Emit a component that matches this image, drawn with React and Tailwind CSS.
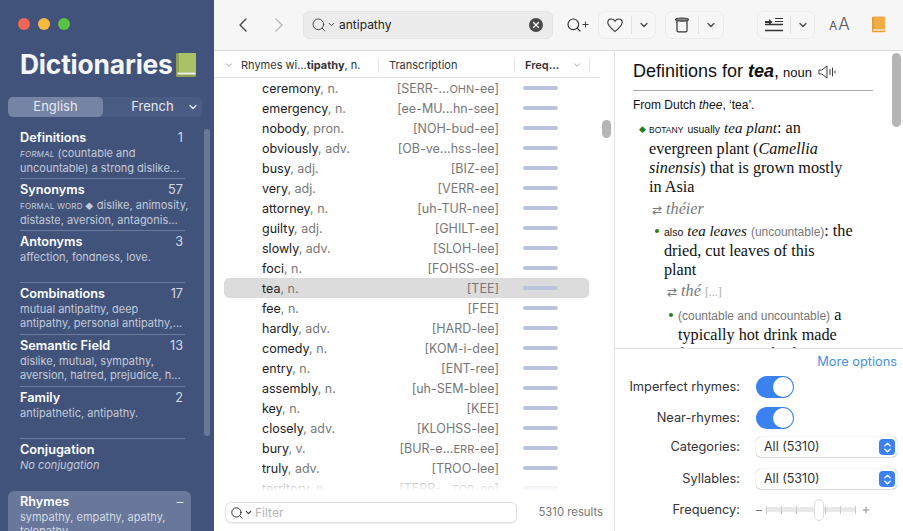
import { ChevronDown, ChevronLeft, ChevronRight, ChevronsUpDown, Plus, Search, X } from "lucide-react"

const sans = "font-['Inter','Liberation_Sans',sans-serif]"

const sections = [
  { title: "Definitions", count: "1", lines: [<><span className="italic text-[8px] tracking-wide">FORMAL</span> (countable and</>, "uncountable) a strong dislike..."] },
  { title: "Synonyms", count: "57", lines: [<><span className="text-[8px] tracking-wide">FORMAL WORD ◆</span> dislike, animosity,</>, "distaste, aversion, antagonis..."] },
  { title: "Antonyms", count: "3", lines: ["affection, fondness, love."] },
  { title: "Combinations", count: "17", lines: ["mutual antipathy, deep", "antipathy, personal antipathy,..."] },
  { title: "Semantic Field", count: "13", lines: ["dislike, mutual, sympathy,", "aversion, hatred, prejudice, h..."] },
  { title: "Family", count: "2", lines: ["antipathetic, antipathy."] },
  { title: "Conjugation", count: "", lines: [<span className="italic">No conjugation</span>] },
]

const rows = [
  ["ceremony", "n.", <>[SERR-...<span className="text-[11px]">OHN</span>-ee]</>],
  ["emergency", "n.", "[ee-MU...hn-see]"],
  ["nobody", "pron.", "[NOH-bud-ee]"],
  ["obviously", "adv.", "[OB-ve...hss-lee]"],
  ["busy", "adj.", "[BIZ-ee]"],
  ["very", "adj.", "[VERR-ee]"],
  ["attorney", "n.", "[uh-TUR-nee]"],
  ["guilty", "adj.", "[GHILT-ee]"],
  ["slowly", "adv.", "[SLOH-lee]"],
  ["foci", "n.", "[FOHSS-ee]"],
  ["tea", "n.", "[TEE]"],
  ["fee", "n.", "[FEE]"],
  ["hardly", "adv.", "[HARD-lee]"],
  ["comedy", "n.", "[KOM-i-dee]"],
  ["entry", "n.", "[ENT-ree]"],
  ["assembly", "n.", "[uh-SEM-blee]"],
  ["key", "n.", "[KEE]"],
  ["closely", "adv.", "[KLOHSS-lee]"],
  ["bury", "v.", <>[BUR-e...<span className="text-[11px]">ERR</span>-ee]</>],
  ["truly", "adv.", "[TROO-lee]"],
  ["territory", "n.", <>[TERR-...<span className="text-[11px]">TOR</span>-ee]</>],
]

function BookIcon({ cover, spine, className }) {
  return (
    <svg className={className} viewBox="0 0 20 24">
      <rect x="0" y="0" width="20" height="24" rx="1.5" fill={spine} />
      <rect x="3" y="0" width="17" height="19" rx="1" fill={cover} />
      <rect x="1.5" y="19.5" width="18" height="2" fill="#f5f5ef" />
    </svg>
  )
}

function Section({ title, count, lines }) {
  return (
    <div className="h-[52px] border-b border-[#6d7c9e] pt-[2px] last:border-b-0">
      <div className="flex h-[17px] items-center justify-between pr-0.5 text-[12.7px] font-semibold leading-[17px] text-white">
        <span>{title}</span>
        <span className="font-normal text-[#d3d8e3]">{count}</span>
      </div>
      {lines.map((line, i) => (
        <div key={i} className="whitespace-nowrap text-[11px] leading-[14px] text-[#c3cad9]">{line}</div>
      ))}
    </div>
  )
}

function Sidebar() {
  return (
    <aside className="relative flex w-[214px] shrink-0 flex-col overflow-hidden bg-[#41537b]">
      <div className="flex shrink-0 gap-2 pl-[18px] pt-[18px]">
        <span className="h-3 w-3 rounded-full bg-[#f2665a]" />
        <span className="h-3 w-3 rounded-full bg-[#f5b93f]" />
        <span className="h-3 w-3 rounded-full bg-[#5cc144]" />
      </div>
      <div className="mt-[11px] flex h-[48px] shrink-0 items-center pl-5">
        <span className="text-[26.4px] font-bold tracking-[-0.2px] text-[#f4f6fa]">Dictionaries</span>
        <BookIcon className="ml-[3px] h-6 w-5" cover="#abc166" spine="#8da24f" />
      </div>
      <div className="ml-2 mt-[8px] flex h-5 w-[194px] shrink-0 items-center rounded-[5px] bg-[#4a5c83] text-[13px] text-[#e6e9f0]">
        <div className="flex h-5 w-[95px] items-center justify-center rounded-[5px] bg-[#7584a4]">English</div>
        <div className="flex flex-1 items-center justify-center pl-[15px]">French</div>
        <ChevronDown className="mr-[3px] h-3 w-3" strokeWidth={2.5} />
      </div>
      <div className="ml-5 mt-[10px] w-[165px] shrink-0">
        {sections.map((s) => <Section key={s.title} {...s} />)}
      </div>
      <div className="ml-2 h-[60px] w-[183px] shrink-0 rounded-t-[6px] bg-[#68779a] pl-3 pr-2 pt-[2px]">
        <div className="flex h-[17px] items-center justify-between text-[12.7px] font-semibold text-white">
          <span>Rhymes</span><span className="font-normal text-[#e6e9f0]">–</span>
        </div>
        <div className="whitespace-nowrap text-[11px] leading-[14px] text-[#d5dae5]">sympathy, empathy, apathy,</div>
        <div className="whitespace-nowrap text-[11px] leading-[14px] text-[#d5dae5]">telepathy,</div>
      </div>
      <div className="absolute left-[204px] top-[129px] h-[307px] w-[6px] rounded-full bg-[#68779a]" />
    </aside>
  )
}

function SplitButton({ children, className }) {
  return (
    <div className={`flex h-7 items-center rounded-[7px] border border-[#ececec] bg-[#f7f7f7] ${className}`}>
      <div className="flex w-[33px] items-center justify-center border-r border-[#e2e2e2]">{children}</div>
      <div className="flex flex-1 items-center justify-center">
        <ChevronDown className="h-3 w-3 text-[#444]" strokeWidth={2.5} />
      </div>
    </div>
  )
}

function Toolbar() {
  return (
    <header className="flex h-[51px] shrink-0 items-center border-b border-[#dcdcdc] bg-[#f6f6f6] pb-px">
      <ChevronLeft className="ml-[17px] h-[24px] w-[24px] text-[#444]" strokeWidth={1.4} />
      <ChevronRight className="ml-[12px] h-[24px] w-[24px] text-[#b9b9b9]" strokeWidth={1.4} />
      <div className="ml-[12px] flex h-7 w-[250px] items-center rounded-[6px] border border-[#e4e4e4] bg-[#ececec] pl-[7px] pr-[9px]">
        <Search className="h-4 w-4 text-[#333]" strokeWidth={1.3} />
        <ChevronDown className="h-[9px] w-[9px] text-[#333]" strokeWidth={2.5} />
        <span className="ml-[3px] text-[12px] text-[#222]">antipathy</span>
        <span className="ml-auto flex h-[14px] w-[14px] items-center justify-center rounded-full bg-[#4a4a4a]">
          <X className="h-[10px] w-[10px] text-white" strokeWidth={3} />
        </span>
      </div>
      <div className="ml-[13px] flex w-[20px] items-center">
        <Search className="h-4 w-4 shrink-0 text-[#333]" strokeWidth={1.7} />
        <Plus className="-ml-[1px] h-[9px] w-[9px] shrink-0 text-[#333]" strokeWidth={2.5} />
      </div>
      <SplitButton className="ml-[12px] w-[58px]">
        <svg className="h-[18px] w-[18px]" viewBox="0 0 18 18" fill="none" stroke="#333" strokeWidth="1.1">
          <path d="M9 15.5C5 12.2 1.8 9.8 1.8 6.6 1.8 4.4 3.5 3 5.3 3 6.9 3 8.2 3.9 9 5.2 9.8 3.9 11.1 3 12.7 3c1.8 0 3.5 1.4 3.5 3.6 0 3.2-3.2 5.6-7.2 8.9Z" />
        </svg>
      </SplitButton>
      <SplitButton className="ml-[9px] w-[59px]">
        <svg className="h-[18px] w-[18px]" viewBox="0 0 18 18" fill="none" stroke="#333" strokeWidth="1.2">
          <ellipse cx="9" cy="3.6" rx="6.5" ry="1.6" fill="#8a8a8a" />
          <path d="M4 5v9.5c0 .8.6 1.3 1.3 1.3h7.4c.7 0 1.3-.5 1.3-1.3V5" />
        </svg>
      </SplitButton>
      <SplitButton className="ml-[33px] w-[58px]">
        <svg className="h-[18px] w-[20px]" viewBox="0 0 20 18" fill="none" stroke="#333" strokeWidth="1.1">
          <path d="M11 2.5h8M11 5.5h8" />
          <path d="M1 8.5h18M1 14.5h18" strokeWidth="1.3" />
          <path d="M1 6h5" strokeWidth="2" />
          <path d="M5 3l3.5 3L5 9Z" fill="#333" stroke="none" />
        </svg>
      </SplitButton>
      <div className={`ml-[14px] flex w-[22px] items-baseline text-[#555] ${sans}`}>
        <span className="text-[12px]">A</span>
        <span className="ml-[1px] text-[17px] font-light">A</span>
      </div>
      <BookIcon className="ml-[21px] h-[17px] w-[13px]" cover="#f0ac45" spine="#e59c34" />
      <div className="w-[18px]" />
    </header>
  )
}

function ColumnHeader() {
  return (
    <div className="flex h-[27px] w-[386px] shrink-0 items-center border-b border-[#e2e2e2] bg-white pt-[2px] text-[11px] text-[#333]">
      <ChevronDown className="ml-[10px] h-[10px] w-[10px] text-[#999]" strokeWidth={2} />
      <span className="ml-[7px] w-[137px] whitespace-nowrap">Rhymes wi...<b>tipathy</b>, n.</span>
      <span className="h-[15px] border-l border-[#e4e4e4]" />
      <span className="ml-[10px] w-[125px]">Transcription</span>
      <span className="h-[15px] border-l border-[#e4e4e4]" />
      <b className="ml-[10px] w-[47px] font-semibold">Freq...</b>
      <ChevronDown className="h-[10px] w-[10px] text-[#999]" strokeWidth={2} />
      <span className="ml-[7px] h-[15px] border-l border-[#e4e4e4]" />
    </div>
  )
}

function RhymeRow({ word, pos, phon }) {
  const selected = word === "tea"
  return (
    <div className={`ml-[10px] flex h-5 w-[365px] items-center rounded-[5px] ${selected ? "bg-[#dcdcdc]" : ""}`}>
      <span className="ml-[38px] w-[120px] whitespace-nowrap pt-[2px] text-[12.5px] text-[#222]">
        {word}<span className="text-[#777]">, {pos}</span>
      </span>
      <span className="w-[117px] whitespace-nowrap pt-[2px] text-right text-[12.5px] text-[#777]">{phon}</span>
      <span className="ml-[24px] h-1 w-[35px] rounded-full bg-[#b9c4dd]" />
    </div>
  )
}

function RhymeList() {
  return (
    <section className="relative flex w-[401px] shrink-0 flex-col border-r border-[#e0e0e0] bg-white">
      <ColumnHeader />
      <div className="flex-1 overflow-hidden">
        {rows.map(([word, pos, phon]) => <RhymeRow key={word} word={word} pos={pos} phon={phon} />)}
      </div>
      <div className="absolute bottom-[40px] left-0 h-[20px] w-[386px] bg-gradient-to-b from-white/0 to-white" />
      <div className="flex h-[40px] shrink-0 items-center bg-white pl-[11px] pr-[11px] pt-[3px]">
        <div className="flex h-[21px] w-[292px] items-center rounded-[6px] border border-[#e2e2e2] bg-white pl-[4px] shadow-[0_1px_1px_rgba(0,0,0,0.08)]">
          <Search className="h-[14px] w-[14px] text-[#333]" strokeWidth={1.7} />
          <ChevronDown className="h-[9px] w-[9px] text-[#333]" strokeWidth={3} />
          <span className="ml-[2px] text-[12px] text-[#b5b5b5]">Filter</span>
        </div>
        <span className="ml-auto text-[11.3px] text-[#777]">5310 results</span>
      </div>
      <div className="absolute left-[388px] top-[69px] h-[18px] w-[9px] rounded-full bg-[#b5b5b5]" />
    </section>
  )
}

function Definitions() {
  const serif = "font-['Liberation_Serif',serif] text-[16.2px] leading-[19px] text-[#111]"
  const helv = "font-['Liberation_Sans',sans-serif]"
  return (
    <div className="relative min-h-0 flex-1 overflow-hidden bg-white">
      <div className="absolute right-[2px] top-[2px] h-[74px] w-[9px] rounded-full bg-[#b5b5b5]" />
      <div className={`w-[258px] pl-[18px] ${helv}`}>
        <div className="flex h-[40px] items-baseline whitespace-nowrap border-b border-[#a9a9a9] pt-[9px] text-[18px] leading-[22px] text-[#111]">
          <span>Definitions for <b className="italic">tea</b>,</span>
          <span className="ml-[4px] text-[13px]">noun</span>
          <svg className="ml-[6px] h-4 w-[18px] translate-y-[3px]" viewBox="0 0 18 16" fill="none" stroke="#444" strokeWidth="1">
            <path d="M1 6v4h3l5 4V2L4 6H1Z" />
            <path d="M12 5v6M14.5 3.5v9M17 6.5v3" />
          </svg>
        </div>
        <p className="mt-[7px] text-[12px] leading-[15px] text-[#111]">From Dutch <i>thee</i>, ‘tea’.</p>
      </div>
      <div className={`relative ml-[34px] mt-[6px] w-[205px] ${serif}`}>
        <span className="absolute -left-[10px] top-[1px] text-[9px] text-[#2c7a1e]">◆</span>
        <span className={`${helv} text-[8.5px]`}>BOTANY</span> <span className={`${helv} text-[10.5px]`}>usually</span> <i className="text-[15px]">tea plant</i>: an evergreen plant (<i>Camellia sinensis</i>) that is grown mostly in Asia
        <div className="mt-[3px] pl-[3px] text-[#777]"><span className="text-[12px]">⇄</span> <i>théier</i></div>
        <div className="relative ml-[15px] mt-[2px] w-[190px]">
          <span className="absolute -left-[9px] top-[7px] h-[4px] w-[4px] rounded-full bg-[#2c7a1e]" />
          <span className={`${helv} text-[10.5px]`}>also</span> <i className="text-[15px]">tea leaves</i> <span className={`${helv} text-[12px] text-[#777]`}>(uncountable)</span>: the<br />dried, cut leaves of this<br />plant
          <div className="mt-[2px] pl-[3px] text-[#777]"><span className="text-[12px]">⇄</span> <i>thé</i> <span className="text-[12px] text-[#aaa]">[...]</span></div>
          <div className="relative ml-[14px] mt-[4px] w-[170px]">
            <span className="absolute -left-[9px] top-[7px] h-[4px] w-[4px] rounded-full bg-[#2c7a1e]" />
            <span className={`${helv} text-[12px] text-[#777]`}>(countable and uncountable)</span> a typically hot drink made from steeping boiling
          </div>
        </div>
      </div>
    </div>
  )
}

function OptionRow({ label, children }) {
  return (
    <div className="flex items-center">
      <span className="w-[125px] text-right text-[12.8px] text-[#333]">{label}</span>
      <div className="ml-[16px]">{children}</div>
    </div>
  )
}

function Toggle() {
  return (
    <div className="flex h-[22px] w-[38px] items-center justify-end rounded-full bg-[#3b82f0] pr-[1px]">
      <span className="h-5 w-5 rounded-full bg-white" />
    </div>
  )
}

function Select() {
  return (
    <div className="flex h-[20px] w-[141px] items-center justify-between rounded-[5px] bg-white pl-2 pr-[2px] text-[12.5px] text-[#333] shadow-[0_0_1px_rgba(0,0,0,0.45),0_1px_1px_rgba(0,0,0,0.12)]">
      <span>All (5310)</span>
      <span className="flex h-4 w-4 items-center justify-center rounded-[4px] bg-[#3b82f0]">
        <ChevronsUpDown className="h-[13px] w-[13px] text-white" strokeWidth={2.5} />
      </span>
    </div>
  )
}

function FrequencySlider() {
  return (
    <div className="flex items-center text-[#777]">
      <span className="text-[12px]">–</span>
      <div className="relative ml-[4px] flex h-[5px] w-[90px] items-center justify-between rounded-sm bg-[#e9e9e9]">
        {[0, 1, 2, 3, 4, 5, 6].map((t) => (
          <span key={t} className={`h-[8px] w-px ${t === 3 ? "opacity-0" : "bg-[#c9c9c9]"}`} />
        ))}
        <span className="absolute left-[48px] top-[-8px] h-[22px] w-[10px] rounded-full border border-[#dcdcdc] bg-white" />
      </div>
      <Plus className="ml-[5px] h-[10px] w-[10px]" strokeWidth={2} />
    </div>
  )
}

function Options() {
  return (
    <div className="h-[183px] shrink-0 border-t border-[#e0e0e0] bg-white">
      <div className="mt-[5px] pr-[6px] text-right text-[12.8px] leading-[16px] text-[#4a90e2]">More options</div>
      <div className="mt-[6px] flex flex-col">
        <div className="h-[31px]"><OptionRow label="Imperfect rhymes:"><Toggle /></OptionRow></div>
        <div className="h-[29px]"><OptionRow label="Near-rhymes:"><Toggle /></OptionRow></div>
        <div className="h-[32px] pt-[1px]"><OptionRow label="Categories:"><Select /></OptionRow></div>
        <div className="h-[32px] pt-[1px]"><OptionRow label="Syllables:"><Select /></OptionRow></div>
        <div><OptionRow label="Frequency:"><FrequencySlider /></OptionRow></div>
      </div>
    </div>
  )
}

export default function App() {
  return (
    <div className={`flex h-[531px] w-[903px] overflow-hidden bg-white ${sans}`}>
      <Sidebar />
      <main className="flex min-w-0 flex-1 flex-col">
        <Toolbar />
        <div className="flex min-h-0 flex-1">
          <RhymeList />
          <div className="flex min-w-0 flex-1 flex-col">
            <Definitions />
            <Options />
          </div>
        </div>
      </main>
    </div>
  )
}
